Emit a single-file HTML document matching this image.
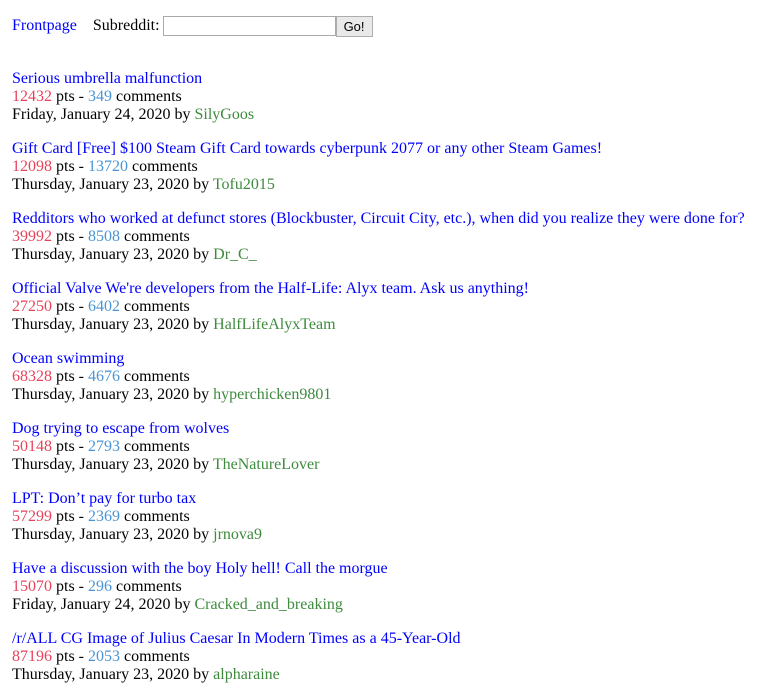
<!DOCTYPE html>
<html><head><style>
body{margin:0;padding:0;font-family:"Liberation Serif",serif;font-size:16px;line-height:18px;color:#000;background:#fff}
.hdr{position:absolute;left:12px;top:16px;height:20px;display:flex;align-items:center}
.hdr a{color:#0000ff;text-decoration:none;margin-right:16px}
.hdr input{width:171px;height:18px;border:1px solid #a9a9a9;margin:0 0 0 3px;padding:0}
.hdr button{height:21px;width:37px;font-family:"Liberation Sans",sans-serif;font-size:13px;border:1px solid #adadad;background:#e9e9e9;padding:0;margin:0}
.list{position:absolute;left:12px;top:70px}
.p{height:70px}
.p a{color:#0000ff;text-decoration:none}
.r{color:#e8435a}.b{color:#4a95d6}.g{color:#3e8b3e}
</style></head><body>
<div class="hdr"><a>Frontpage</a><span>Subreddit:</span><input><button>Go!</button></div>
<div class="list">
<div class="p"><a>Serious umbrella malfunction</a><br><span class="r">12432</span> pts - <span class="b">349</span> comments<br>Friday, January 24, 2020 by <span class="g">SilyGoos</span></div>
<div class="p"><a>Gift Card [Free] $100 Steam Gift Card towards cyberpunk 2077 or any other Steam Games!</a><br><span class="r">12098</span> pts - <span class="b">13720</span> comments<br>Thursday, January 23, 2020 by <span class="g">Tofu2015</span></div>
<div class="p"><a>Redditors who worked at defunct stores (Blockbuster, Circuit City, etc.), when did you realize they were done for?</a><br><span class="r">39992</span> pts - <span class="b">8508</span> comments<br>Thursday, January 23, 2020 by <span class="g">Dr_C_</span></div>
<div class="p"><a>Official Valve We're developers from the Half-Life: Alyx team. Ask us anything!</a><br><span class="r">27250</span> pts - <span class="b">6402</span> comments<br>Thursday, January 23, 2020 by <span class="g">HalfLifeAlyxTeam</span></div>
<div class="p"><a>Ocean swimming</a><br><span class="r">68328</span> pts - <span class="b">4676</span> comments<br>Thursday, January 23, 2020 by <span class="g">hyperchicken9801</span></div>
<div class="p"><a>Dog trying to escape from wolves</a><br><span class="r">50148</span> pts - <span class="b">2793</span> comments<br>Thursday, January 23, 2020 by <span class="g">TheNatureLover</span></div>
<div class="p"><a>LPT: Don’t pay for turbo tax</a><br><span class="r">57299</span> pts - <span class="b">2369</span> comments<br>Thursday, January 23, 2020 by <span class="g">jrnova9</span></div>
<div class="p"><a>Have a discussion with the boy Holy hell! Call the morgue</a><br><span class="r">15070</span> pts - <span class="b">296</span> comments<br>Friday, January 24, 2020 by <span class="g">Cracked_and_breaking</span></div>
<div class="p"><a>/r/ALL CG Image of Julius Caesar In Modern Times as a 45-Year-Old</a><br><span class="r">87196</span> pts - <span class="b">2053</span> comments<br>Thursday, January 23, 2020 by <span class="g">alpharaine</span></div>
</div>
</body></html>
